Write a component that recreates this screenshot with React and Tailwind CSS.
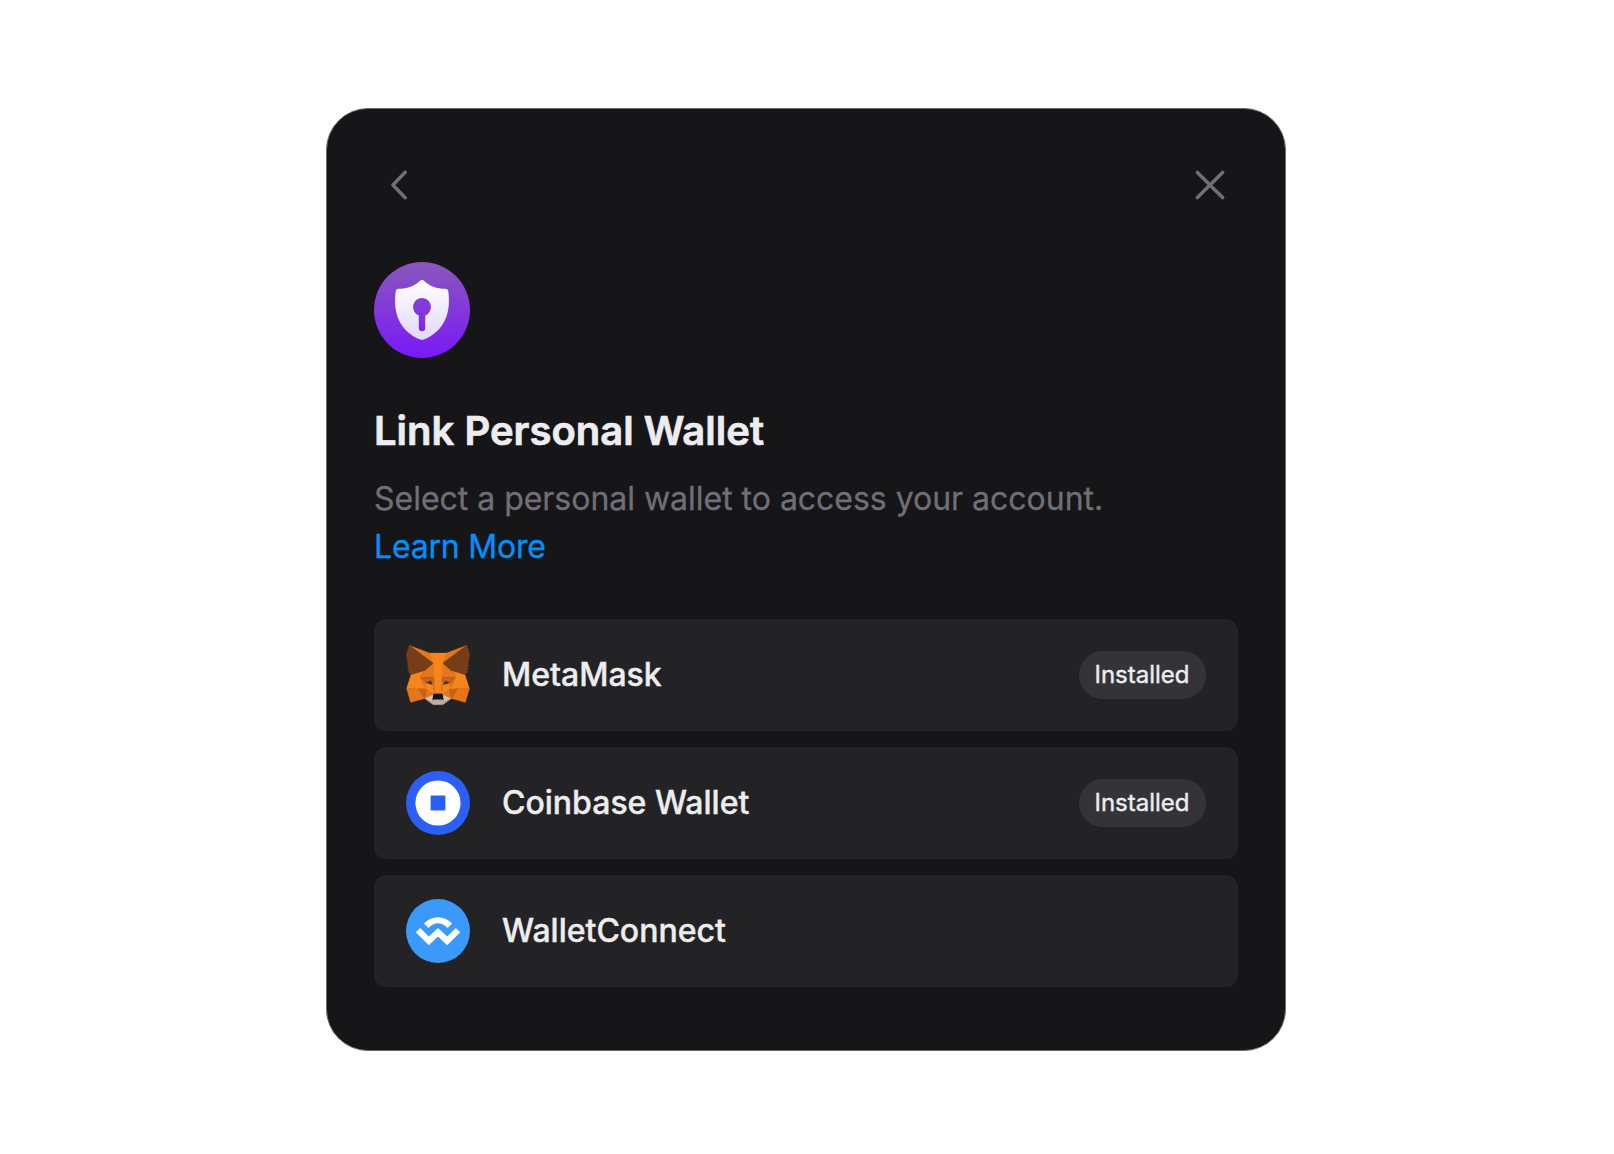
const FOX = [
  ['#E2761B', '274.1,35.5 174.6,109.4 193,65.8'],
  ['#E4761B', '44.4,35.5 143.1,110.1 125.6,65.8'],
  ['#E4761B', '238.3,206.8 211.8,247.4 268.5,263 284.8,207.7'],
  ['#E4761B', '33.9,207.7 50.1,263 106.8,247.4 80.3,206.8'],
  ['#E4761B', '103.6,138.2 87.8,162.1 144.1,164.6 142.1,104.1'],
  ['#E4761B', '214.9,138.2 175.9,103.4 174.6,164.6 230.8,162.1'],
  ['#E4761B', '106.8,247.4 140.6,230.9 111.4,208.1'],
  ['#E4761B', '177.9,230.9 211.8,247.4 207.1,208.1'],
  ['#D7C1B3', '211.8,247.4 177.9,230.9 180.6,253 180.3,262.3'],
  ['#D7C1B3', '106.8,247.4 138.3,262.3 138.1,253 140.6,230.9'],
  ['#233447', '138.8,193.5 110.6,185.2 130.5,176.1'],
  ['#233447', '179.7,193.5 188,176.1 208,185.2'],
  ['#CD6116', '106.8,247.4 111.6,206.8 80.3,207.7'],
  ['#CD6116', '207,206.8 211.8,247.4 238.3,207.7'],
  ['#CD6116', '230.8,162.1 174.6,164.6 179.8,193.5 188.1,176.1 208.1,185.2'],
  ['#CD6116', '110.6,185.2 130.6,176.1 138.8,193.5 144.1,164.6 87.8,162.1'],
  ['#E4751F', '87.8,162.1 111.4,208.1 110.6,185.2'],
  ['#E4751F', '208.1,185.2 207.1,208.1 230.8,162.1'],
  ['#E4751F', '144.1,164.6 138.8,193.5 145.4,227.6 146.9,182.7'],
  ['#E4751F', '174.6,164.6 171.9,182.6 173.1,227.6 179.8,193.5'],
  ['#F6851B', '179.8,193.5 173.1,227.6 177.9,230.9 207.1,208.1 208.1,185.2'],
  ['#F6851B', '110.6,185.2 111.4,208.1 140.6,230.9 145.4,227.6 138.8,193.5'],
  ['#C0AD9E', '180.3,262.3 180.6,253 178.1,250.8 140.4,250.8 138.1,253 138.3,262.3 106.8,247.4 117.8,256.4 140.1,271.9 178.4,271.9 200.8,256.4 211.8,247.4'],
  ['#161616', '177.9,230.9 173.1,227.6 145.4,227.6 140.6,230.9 138.1,253 140.4,250.8 178.1,250.8 180.6,253'],
  ['#763D16', '278.3,114.2 286.8,73.4 274.1,35.5 177.9,106.9 214.9,138.2 267.2,153.5 278.8,140 273.8,136.4 281.8,129.1 275.6,124.3 283.6,118.2'],
  ['#763D16', '31.8,73.4 40.3,114.2 34.9,118.2 42.9,124.3 36.8,129.1 44.8,136.4 39.8,140 51.3,153.5 103.6,138.2 140.6,106.9 44.4,35.5'],
  ['#F6851B', '267.2,153.5 214.9,138.2 230.8,162.1 207.1,208.1 238.3,207.7 284.8,207.7'],
  ['#F6851B', '103.6,138.2 51.3,153.5 33.9,207.7 80.3,207.7 111.4,208.1 87.8,162.1'],
  ['#F6851B', '174.6,164.6 177.9,106.9 193.1,65.8 125.6,65.8 140.6,106.9 144.1,164.6 145.3,182.8 145.4,227.6 173.1,227.6 173.3,182.8'],
];

function MetaMaskIcon() {
  return (
    <svg className="size-16" viewBox="31.8 26.2 255 255">
      {FOX.map(([color, points]) => (
        <polygon key={points} points={points} fill={color} stroke={color} strokeWidth="1" strokeLinejoin="round" />
      ))}
    </svg>
  );
}

function CoinbaseIcon() {
  return (
    <svg className="size-16" viewBox="0 0 64 64">
      <circle cx="32" cy="32" r="32" fill="#2C5FF6" />
      <circle cx="32" cy="32" r="22.6" fill="#fff" />
      <rect x="24.6" y="24.6" width="14.8" height="14.8" rx="1.2" fill="#2C5FF6" />
    </svg>
  );
}

function WalletConnectIcon() {
  return (
    <svg className="size-16" viewBox="0 0 64 64">
      <circle cx="32" cy="32" r="32" fill="#3B99FC" />
      <path
        fill="#fff"
        d="M17.9 24.5C26 16 38 16 46.1 24.5L41.6 29C36 22.6 28 22.6 22.4 29ZM14.2 28.9L22.8 37.4L32 29L41.2 37.4L49.8 28.9L54.2 33.3L41.2 46.2L32 37.6L22.8 46.2L9.8 33.3Z"
      />
    </svg>
  );
}

function ShieldIcon() {
  return (
    <svg className="size-24" viewBox="0 0 96 96">
      <defs>
        <linearGradient id="disc" x1="0" y1="0" x2="0" y2="1">
          <stop offset="0" stopColor="#8A57BC" />
          <stop offset="1" stopColor="#7A18F8" />
        </linearGradient>
        <linearGradient id="shield" x1="0" y1="0" x2="0" y2="1">
          <stop offset="0" stopColor="#FFFFFF" />
          <stop offset="1" stopColor="#E2D8FA" />
        </linearGradient>
      </defs>
      <circle cx="48" cy="48" r="48" fill="url(#disc)" />
      <path
        fill="url(#shield)"
        fillRule="evenodd"
        d="M46.4 18.4Q48 17 49.6 18.4C56 24.3 62.5 26.7 71.4 26.7Q73.9 26.7 74.2 29C77.4 51 70.5 69 49.8 77.6Q48 78.4 46.2 77.6C25.5 69 18.6 51 21.8 29Q22.1 26.7 24.6 26.7C33.5 26.7 40 24.3 46.4 18.4ZM48 36A9 9 0 0 0 44.8 53.4V66A3.2 3.2 0 0 0 51.2 66V53.4A9 9 0 0 0 48 36Z"
      />
    </svg>
  );
}

const WALLETS = [
  { name: 'MetaMask', Icon: MetaMaskIcon, installed: true },
  { name: 'Coinbase Wallet', Icon: CoinbaseIcon, installed: true },
  { name: 'WalletConnect', Icon: WalletConnectIcon, installed: false },
];

export default function App() {
  return (
    <div className="flex h-[1154px] items-start bg-white pt-[108px] pl-[326px] font-['Inter',sans-serif]">
      <main className="h-[943px] w-[960px] rounded-[42px] border border-[#6a6a6c] bg-[#161618] px-[47px] pt-[61px]">
        <header className="flex h-[30px] items-center justify-between pr-[13px] pl-4">
          <button aria-label="Back">
            <svg className="h-[30px] w-[18px]" viewBox="0 0 18 30" fill="none" stroke="#706F78" strokeWidth="3.4" strokeLinecap="round" strokeLinejoin="round">
              <path d="M15.2 2.3L2.9 15L15.2 27.7" />
            </svg>
          </button>
          <button aria-label="Close">
            <svg className="size-[30px]" viewBox="0 0 30 30" fill="none" stroke="#706F78" strokeWidth="3.5" strokeLinecap="round">
              <path d="M2.4 2.4L27.6 27.6M27.6 2.4L2.4 27.6" />
            </svg>
          </button>
        </header>
        <div className="mt-[62px]">
          <ShieldIcon />
        </div>
        <h1 className="mt-[53px] text-[40px] leading-10 font-semibold text-[#EDEDEF] [-webkit-text-stroke:0.7px_#EDEDEF]">
          Link Personal Wallet
        </h1>
        <p className="mt-6 text-[32px] leading-12 tracking-[-0.02px] text-[#706F78] [-webkit-text-stroke:0.3px]">
          Select a personal wallet to access your account.
          <a className="block w-fit tracking-[-0.2px] text-[#0091FF]">Learn More</a>
        </p>
        <ul className="mt-12 flex flex-col gap-4">
          {WALLETS.map(({ name, Icon, installed }) => (
            <li key={name} className="flex h-28 items-center rounded-xl bg-[#232325] px-8">
              <Icon />
              <span className="ml-8 text-[32px] leading-12 font-medium text-[#EDEDEF] [-webkit-text-stroke:0.4px]">{name}</span>
              {installed && (
                <span className="ml-auto flex h-12 items-center rounded-full bg-[#343338] pr-[16.5px] pl-[15.5px] text-2xl text-[#EDEDEF] [-webkit-text-stroke:0.4px]">
                  Installed
                </span>
              )}
            </li>
          ))}
        </ul>
      </main>
    </div>
  );
}
